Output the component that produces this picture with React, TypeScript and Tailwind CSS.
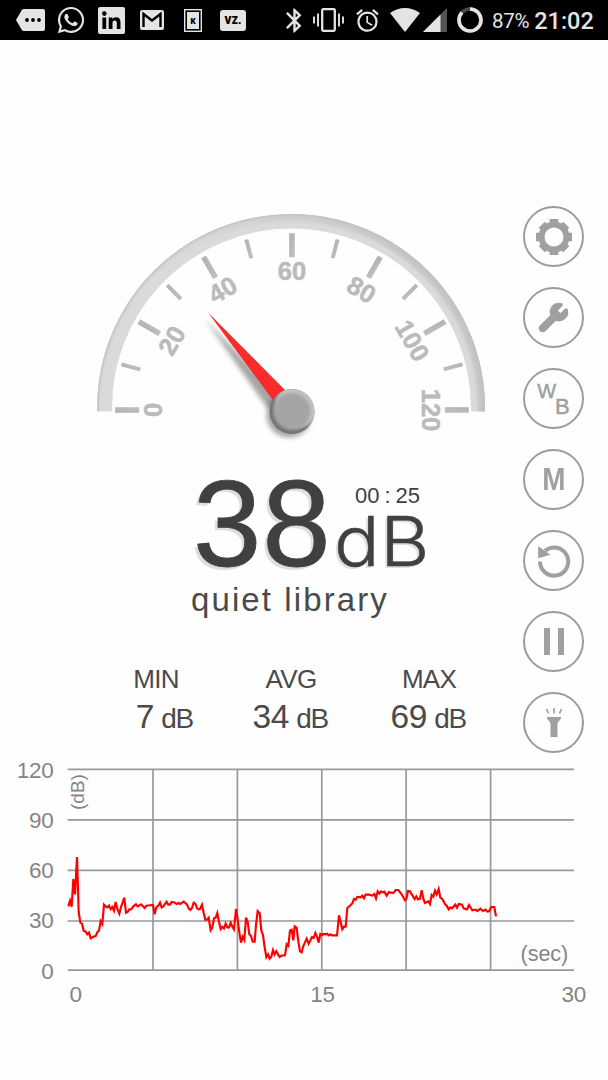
import type { ReactNode } from 'react';
import { FaWhatsapp } from 'react-icons/fa';
import { MdAlarm, MdBluetooth } from 'react-icons/md';
import { Wrench } from 'lucide-react';

const majorTicks = [0, 20, 40, 60, 80, 100, 120];
const minorTicks = [10, 30, 50, 70, 90, 110];

const stats = [
    { label: 'MIN', value: 7, className: 'w-[78px]' },
    { label: 'AVG', value: 34, className: 'ml-[57px] w-[78px]' },
    { label: 'MAX', value: 69, className: 'ml-[60px] w-[78px]' },
];

// Level history, three units per pixel
const history =
    '205,454 210,437 215,455 220,372 225,418 231,306 234,400 236,470 241,503 246,506 251,527 257,530 262,538 267,533 272,550 278,546 287,543 293,530 297,527 302,499 307,507 312,449 317,454 322,457 327,452 332,462 337,456 342,467 347,441 353,465 358,476 363,456 373,428 378,473 383,471 388,463 393,463 400,454 408,448 413,454 423,448 434,459 439,452 459,450 464,478 469,457 475,452 480,443 485,457 490,454 500,440 505,449 510,449 515,441 525,443 530,447 536,444 541,447 551,440 561,448 566,460 571,465 576,459 581,443 586,446 591,460 596,463 600,462 606,449 611,473 616,494 621,494 626,488 632,526 637,518 642,490 647,488 652,474 657,500 662,522 667,516 672,520 677,506 682,517 687,517 692,503 697,515 702,523 708,462 713,494 718,532 723,563 728,545 733,555 738,488 743,500 748,538 753,543 758,560 764,560 768,510 773,468 779,474 784,527 789,540 794,577 799,606 804,598 809,611 814,605 819,585 824,598 829,589 834,598 839,606 845,602 855,601 860,568 865,573 870,527 875,524 880,556 884,514 890,518 895,560 900,589 905,592 910,573 920,551 926,566 936,546 941,549 946,534 951,545 956,563 961,537 966,540 971,537 976,538 981,536 986,541 991,538 996,541 1011,541 1017,481 1022,502 1027,523 1032,515 1037,515 1042,459 1052,450 1057,445 1062,432 1067,434 1072,426 1082,427 1087,422 1092,430 1097,419 1107,419 1117,422 1123,417 1128,430 1133,409 1138,416 1143,409 1148,412 1153,410 1160,422 1167,411 1177,414 1182,412 1187,405 1195,405 1205,418 1215,436 1219,432 1224,408 1230,409 1234,416 1244,432 1249,424 1254,433 1260,431 1265,406 1270,431 1275,444 1285,439 1290,447 1295,420 1300,425 1305,407 1310,418 1316,402 1321,428 1327,432 1335,447 1340,452 1346,463 1351,457 1356,460 1366,449 1371,458 1376,447 1386,449 1391,460 1401,463 1407,450 1417,466 1427,464 1432,468 1441,461 1449,468 1457,464 1462,470 1467,469 1474,456 1483,456 1488,484';

function StatusBar() {
    return (
        <header className="flex h-10 w-full shrink-0 items-center bg-black text-[#e4e4e4]">
            <svg className="ml-4 h-[22px] w-[29px] shrink-0" viewBox="0 0 29 22">
                <path fill="currentColor" d="M8 0H27Q29 0 29 2V20Q29 22 27 22H8Q6.500 22 5.700 20.700L0 11L5.700 1.300Q6.500 0 8 0Z" />
                <circle cx="11" cy="11" r="1.900" fill="#000" />
                <circle cx="17" cy="11" r="1.900" fill="#000" />
                <circle cx="23" cy="11" r="1.900" fill="#000" />
            </svg>
            <FaWhatsapp className="ml-[11px] h-[30px] w-[30px] shrink-0" />
            <div className="ml-3 flex h-[27px] w-[27px] shrink-0 items-center justify-center rounded-[2px] bg-[#e4e4e4]">
                <svg className="h-[19px] w-[19px]" viewBox="0 0 19 19">
                    <circle cx="2.300" cy="2.600" r="2.300" />
                    <path d="M0.400 6.500H4.200V18H0.400ZM6.700 6.500H10.300V8.100C11 6.900 12.300 6.200 14 6.200C17.500 6.200 18.500 8.400 18.500 11.500V18H14.800V12.200C14.800 10.700 14.500 9.500 12.800 9.500C11 9.500 10.500 10.800 10.500 12.200V18H6.700Z" />
                </svg>
            </div>
            <svg className="ml-[15px] h-5 w-6 shrink-0" viewBox="0 0 24 20">
                <rect width="24" height="20" rx="2" fill="currentColor" />
                <path d="M3.500 17V4L12 10.500L20.500 4V17" fill="none" stroke="#000" strokeWidth="2.400" />
            </svg>
            <svg className="ml-5 h-[23px] w-[18px] shrink-0" viewBox="0 0 18 23">
                <rect width="18" height="23" fill="currentColor" />
                <rect x="2.200" y="2.200" width="13.600" height="18.600" fill="none" stroke="#000" strokeWidth="1.600" />
                <text x="9" y="14.500" textAnchor="middle" fontSize="8" fontWeight="900" fontFamily="Open Sans, sans-serif">K</text>
            </svg>
            <div className="ml-[18px] flex h-[21px] w-[26px] shrink-0 items-center justify-center rounded-[3px] bg-[#e4e4e4] font-['Open_Sans',sans-serif] text-[10px] font-extrabold leading-none tracking-[0.4px] text-black">
                VZ.
            </div>
            <MdBluetooth className="ml-[34px] h-[29px] w-[29px] shrink-0" />
            <svg className="ml-1 h-6 w-[31px] shrink-0" viewBox="0 0 31 24" fill="none" stroke="currentColor">
                <rect x="9.200" y="1.200" width="12.600" height="21.600" rx="1" strokeWidth="2.300" />
                <path strokeWidth="1.900" d="M1 8.500V15.500M5 5.500V18.500M26 5.500V18.500M30 8.500V15.500" />
            </svg>
            <MdAlarm className="ml-[10px] h-[27px] w-[27px] shrink-0" />
            <svg className="ml-[9px] h-6 w-[30px] shrink-0" viewBox="0 0 30 24">
                <path fill="currentColor" d="M0 5Q15 -5 30 5L15 24Z" />
            </svg>
            <svg className="ml-[3px] h-6 w-6 shrink-0" viewBox="0 0 24 24">
                <path fill="#555" d="M24 0V24H0Z" />
                <path fill="currentColor" d="M17.500 6.500V24H0Z" />
            </svg>
            <svg className="ml-[10px] h-[26px] w-[26px] shrink-0" viewBox="0 0 26 26" fill="none" strokeWidth="3.600">
                <circle cx="13" cy="13" r="11" stroke="#4a4a4a" />
                <circle cx="13" cy="13" r="11" stroke="currentColor" strokeDasharray="87 13" pathLength="100" transform="rotate(-90 13 13)" />
            </svg>
            <span className="ml-[9px] mt-px font-['Roboto',sans-serif] text-[20.5px] leading-[24px] tracking-[-0.3px]">87%</span>
            <span className="ml-[5px] mt-px font-['Roboto',sans-serif] text-[23.5px] font-medium leading-[24px]">21:02</span>
        </header>
    );
}

function Gauge() {
    return (
        <svg className="ml-[85px] h-[240px] w-[410px] shrink-0" viewBox="85 205 410 240">
            <defs>
                <filter id="soft" x="-20%" y="-20%" width="140%" height="140%">
                    <feGaussianBlur stdDeviation="1.5" />
                </filter>
                <filter id="shadow" x="-30%" y="-30%" width="160%" height="160%">
                    <feGaussianBlur stdDeviation="2.5" />
                </filter>
                <clipPath id="ring">
                    <path d="M97 411.600V408A194 194 0 0 1 485 408V411.600H471V408A179.500 179.500 0 0 0 112 408V411.600Z" />
                </clipPath>
                <clipPath id="hub">
                    <circle cx="292" cy="411.500" r="22.500" />
                </clipPath>
                <linearGradient id="tick" x1="0" y1="0" x2="1" y2="1">
                    <stop offset="0" stopColor="#b0b0b0" />
                    <stop offset="1" stopColor="#c2c2c2" />
                </linearGradient>
                <linearGradient id="edge" gradientUnits="userSpaceOnUse" x1="170" y1="0" x2="400" y2="0">
                    <stop offset="0" stopColor="#c6c6c6" stopOpacity="0" />
                    <stop offset="1" stopColor="#c6c6c6" />
                </linearGradient>
            </defs>

            <g clipPath="url(#ring)">
                <rect x="85" y="205" width="410" height="240" fill="#dadada" />
                <path d="M98 408A193 193 0 0 1 484 408V420" fill="none" stroke="url(#edge)" strokeWidth="12" filter="url(#soft)" />
                <path d="M96 420V408A195 195 0 0 1 486 408V420" fill="none" stroke="#c0c0c0" strokeWidth="5" filter="url(#soft)" />
            </g>

            {majorTicks.map((n) => (
                <g key={n} transform={`rotate(${n * 1.5 - 90} 292 410)`}>
                    <rect x="289.200" y="233.200" width="5.600" height="24" fill="url(#tick)" />
                    <text x="292" y="280" textAnchor="middle" fontFamily="Liberation Sans, sans-serif" fontSize="25.500" fontWeight="700" fill="#bababa" stroke="#bababa" strokeWidth="0.500">
                        {n}
                    </text>
                </g>
            ))}
            {minorTicks.map((n) => (
                <rect key={n} x="290" y="233.500" width="4" height="19.500" fill="url(#tick)" transform={`rotate(${n * 1.5 - 90} 292 410)`} />
            ))}

            <path d="M205 319L282 399L268 409Z" fill="#000" opacity="0.35" filter="url(#shadow)" />
            <circle cx="289" cy="415" r="22.500" fill="#000" opacity="0.35" filter="url(#shadow)" />
            <path d="M208 312.500L292 397L278 407Z" fill="#f92b2b" />
            <g clipPath="url(#hub)">
                <circle cx="292" cy="411.500" r="23" fill="#747474" />
                <circle cx="297" cy="406" r="22" fill="#c2c2c2" filter="url(#soft)" />
                <circle cx="292" cy="411.500" r="18.500" fill="#a4a4a4" filter="url(#soft)" />
            </g>
        </svg>
    );
}

function Readout() {
    return (
        <div className="mt-[31px] flex h-24 pl-[193px] text-[#404040]">
            <span className="w-[135px] text-[123px] leading-[96px] tracking-[0.8px] [-webkit-text-stroke:0.8px_#404040] [text-shadow:-3px_3px_0_#dedede]">
                38
            </span>
            <div className="flex flex-col">
                <div className="ml-[27px] mt-[9px] flex gap-[5px] text-[22px] leading-[22px]">
                    <span>00</span>
                    <span>:</span>
                    <span>25</span>
                </div>
                <span className="ml-[6px] mt-[7px] origin-left scale-x-[1.1] font-['Inter',sans-serif] text-[69px] font-light leading-[54px] tracking-[0.5px] [-webkit-text-stroke:0.5px_#404040] [text-shadow:-2px_2px_0_#dedede]">
                    dB
                </span>
            </div>
        </div>
    );
}

function Stats() {
    return (
        <div className="mt-[45px] flex pl-[116px] text-[#4a4a4a]">
            {stats.map((stat) => (
                <div key={stat.label} className={`flex flex-col whitespace-nowrap ${stat.className}`}>
                    <span className="pl-0.5 text-center text-[26px] leading-7 tracking-[-0.7px]">{stat.label}</span>
                    <div className="mr-px mt-1.5 flex items-baseline justify-end gap-[7px] leading-9">
                        <span className="text-[33.5px] tracking-[-0.3px]">{stat.value}</span>
                        <span className="text-[28px] tracking-[-1.2px]">dB</span>
                    </div>
                </div>
            ))}
        </div>
    );
}

function RoundButton({ label, children }: { label: string; children: ReactNode }) {
    return (
        <button aria-label={label} className="flex h-[61px] w-[61px] shrink-0 items-center justify-center rounded-full border-2 border-[#9c9c9c] text-[#a0a0a0]">
            {children}
        </button>
    );
}

function Toolbar() {
    return (
        <nav className="mt-[166px] flex flex-col gap-5">
            <RoundButton label="Settings">
                <svg className="h-9 w-9" viewBox="-18 -18 36 36" fill="currentColor">
                    <path d="M-4.300 -18H4.300V-11H-4.300ZM-4.300 18H4.300V11H-4.300ZM-18 -4.300V4.300H-11V-4.300ZM18 -4.300V4.300H11V-4.300Z" />
                    <path d="M-4.300 -17.300H4.300V-11H-4.300ZM-4.300 17.300H4.300V11H-4.300ZM-17.300 -4.300V4.300H-11V-4.300ZM17.300 -4.300V4.300H11V-4.300Z" transform="rotate(45)" />
                    <circle r="12.500" fill="none" stroke="currentColor" strokeWidth="6" />
                </svg>
            </RoundButton>
            <RoundButton label="Tools">
                <Wrench className="h-[33px] w-[33px] fill-current" strokeWidth={1.5} />
            </RoundButton>
            <RoundButton label="Weighting">
                <span className="flex items-start leading-[22px] [-webkit-text-stroke:0.5px_#a0a0a0]">
                    <span className="text-[20px]">W</span>
                    <span className="-ml-px mt-4 text-[22px]">B</span>
                </span>
            </RoundButton>
            <RoundButton label="Mode">
                <span className="scale-x-90 text-[31px] font-bold leading-none">M</span>
            </RoundButton>
            <RoundButton label="Reset">
                <svg className="h-[34px] w-[34px]" viewBox="0 0 34 34">
                    <path d="M3 17.500A14.100 14.100 0 1 0 8 6.800" fill="none" stroke="currentColor" strokeWidth="4" />
                    <path d="M1.200 2.300V14.300L13.500 10.700Z" fill="currentColor" />
                </svg>
            </RoundButton>
            <RoundButton label="Pause">
                <svg className="h-[27px] w-5" viewBox="0 0 20 27" fill="currentColor">
                    <path d="M0 0H6V27H0ZM14 0H20V27H14Z" />
                </svg>
            </RoundButton>
            <RoundButton label="Flashlight">
                <svg className="h-[29px] w-[18px]" viewBox="0 0 18 29" fill="currentColor">
                    <path d="M2 9H16V10.500L12.500 15V29H5.500V15L2 10.500Z" />
                    <path d="M1.500 1L3.500 5.500M9 0V5.500M16.500 1L14.500 5.500" stroke="currentColor" strokeWidth="1.700" />
                </svg>
            </RoundButton>
        </nav>
    );
}

function Chart() {
    return (
        <svg className="h-[260px] w-full shrink-0" viewBox="0 0 608 260" fontFamily="Liberation Sans, sans-serif" fontSize="22.500" fill="#858585">
            <g stroke="#999" strokeWidth="1.700">
                {[14.4, 64.8, 115.4, 166, 215.2].map((y) => (
                    <path key={y} d={`M67.700 ${y}H574`} />
                ))}
                {[153, 237.4, 321.8, 406.1, 490.6].map((x) => (
                    <path key={x} d={`M${x} 14V215`} />
                ))}
            </g>
            {[120, 90, 60, 30, 0].map((n, i) => (
                <text key={n} x="53.500" y={22.8 + i * 50.2} textAnchor="end" letterSpacing="-0.300">
                    {n}
                </text>
            ))}
            {[0, 15, 30].map((n, i) => (
                <text key={n} x={[75.7, 322.4, 573.7][i]} y="246.600" textAnchor="middle" letterSpacing="-0.300">
                    {n}
                </text>
            ))}
            <text x="520.500" y="206" fontSize="21.500">(sec)</text>
            <text transform="translate(84 55) rotate(-90)" fontSize="19">(dB)</text>
            <polyline points={history} transform="scale(0.33333)" fill="none" stroke="#f00" strokeWidth="6.500" />
        </svg>
    );
}

export default function App() {
    return (
        <div className="flex h-[1080px] w-[608px] flex-col overflow-hidden bg-[#fefefe] font-['Liberation_Sans',Arial,sans-serif]">
            <StatusBar />
            <div className="flex h-[715px] shrink-0">
                <main className="flex w-[523px] shrink-0 flex-col pt-[165px]">
                    <Gauge />
                    <Readout />
                    <h1 className="ml-[191px] mt-[8px] text-[33px] leading-10 tracking-[2.1px] text-[#4a4a4a]">quiet library</h1>
                    <Stats />
                </main>
                <Toolbar />
            </div>
            <Chart />
        </div>
    );
}
